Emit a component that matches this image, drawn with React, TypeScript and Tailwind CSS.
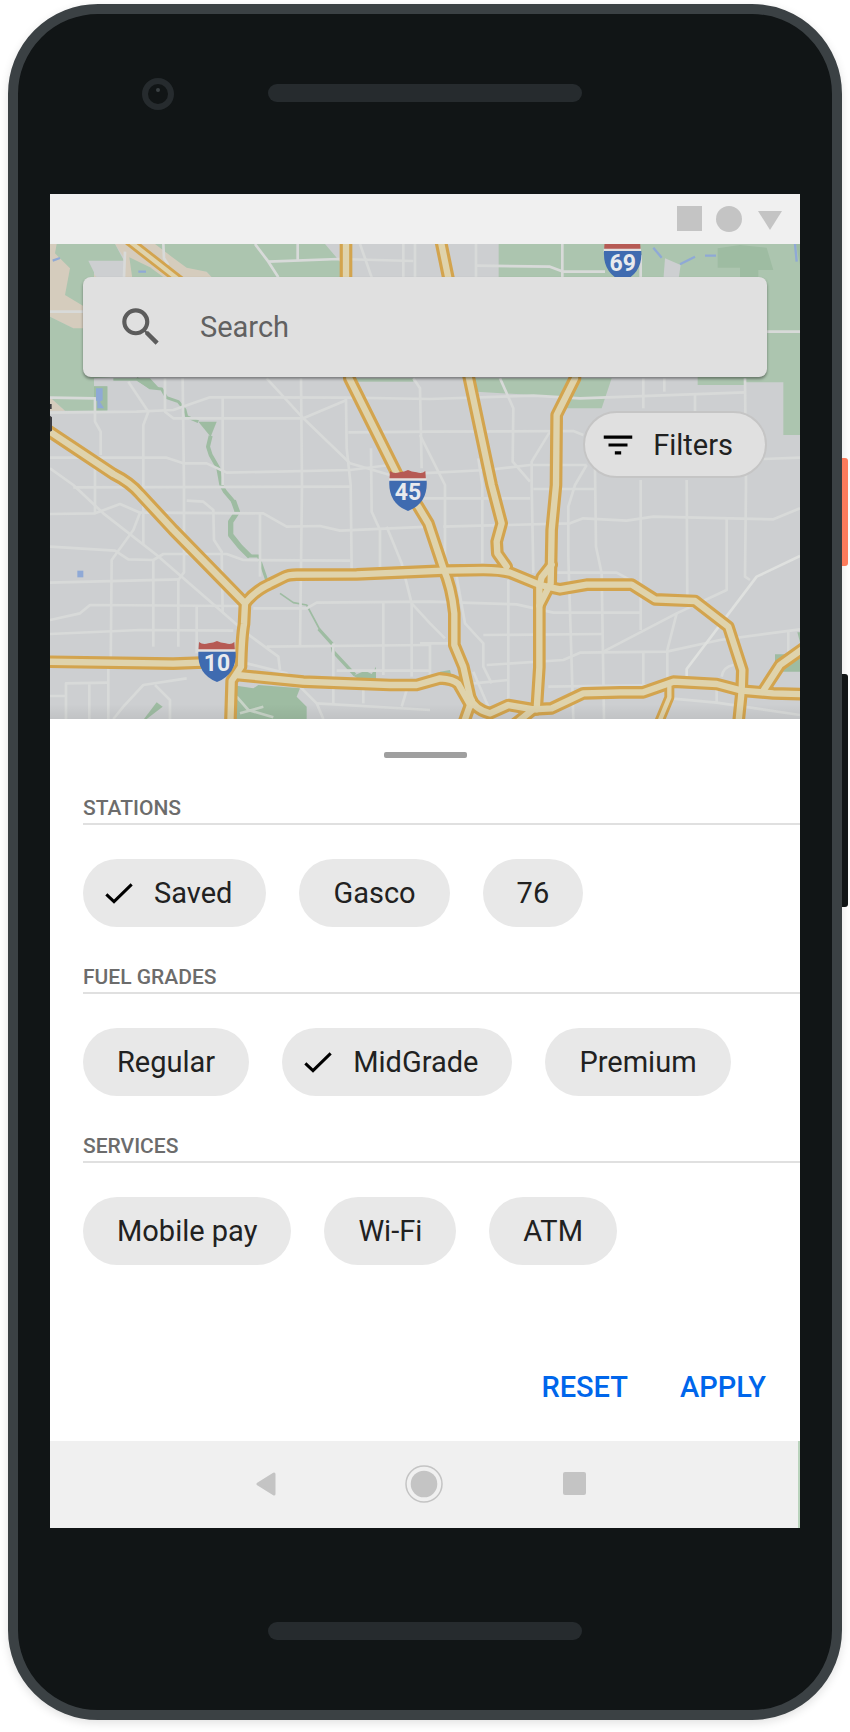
import React, { useState } from "react";

const MINOR_ROADS = [
  "M225 23L222 100", "M340 0L342 43 355 63", "M615 0L655 53 685 100", "M655 53L865 45 1090 51", "M743 0V48",
  "M930 0L965 100", "M1060 0V100", "M1095 0V100", "M0 203H100", "M0 461L135 463V533L152 563V633",
  "M0 506L260 503 370 498 480 460 890 461 1140 465 1450 455 1590 463 2085 445", "M235 413L295 503 280 543V900",
  "M398 403L402 723V985L385 1008V1208", "M345 403V503L370 523H760L890 468", "M518 460V723",
  "M650 403L760 523 900 658 1020 693", "M753 403L756 723 750 1208", "M888 461L890 613 902 723 905 978",
  "M895 565L1140 563 1570 561 1600 573", "M963 613L965 803 990 858V978", "M1090 403L1110 433 1115 673",
  "M0 641H350L400 658H470L530 686 900 678 1020 663", "M0 673L70 723 160 808 320 933 510 1098 590 1168 685 1238 690 1278",
  "M0 810L135 808 210 780 270 806 640 808 710 848 810 846 870 860 1140 848", "M135 633V808",
  "M0 908L195 920 235 946 310 948 340 930H530L580 948 900 950", "M270 806L250 858 185 948 182 1268", "M310 948V1208",
  "M0 1016L390 1006", "M0 1128L90 1108 120 1083 570 1086", "M0 1170L270 1158 550 1160", "M440 1083V1228",
  "M70 730L900 728", "M410 770L460 773 490 798 492 888 515 923 518 1103", "M630 808V998",
  "M610 1093H770L800 1076 1140 1073 1400 1081 1510 1106H1770", "M650 1208L1140 1203",
  "M1010 848L1055 958 1085 1078 1140 1138 1185 1183", "M1000 1073V1293", "M1085 1078V1298", "M850 1198V1378",
  "M860 1280H1140", "M590 1258L710 1288 800 1378 820 1425", "M800 1378L1140 1398", "M175 1268V1425",
  "M0 1356H45M48 1425V1318L175 1316M118 1318V1425", "M190 1425L220 1388 280 1323 410 1303", "M315 1323L360 1368V1425",
  "M940 1338V1378", "M1070 1338L1055 1388", "M1278 0V100", "M1278 65L1500 68 1540 83H1665", "M1537 0V100", "M1772 33V100",
  "M2150 263H2250", "M1350 403L1390 493 1388 653 1440 713", "M1780 403V493", "M1772 708V1158", "M1843 403V443",
  "M1935 448V508", "M2085 403L2088 723 2085 998 2100 1008", "M2140 645L2250 641", "M1110 573L1185 723V958",
  "M1110 688L1310 678 1440 663H1610", "M1500 563L1445 653V723L1450 988", "M1610 663L1575 723 1555 788V938L1570 1425",
  "M1635 673L1638 908 1655 988 1662 1425", "M1910 708L1912 1078", "M1285 643L1297 723V958", "M1110 763H1440M1450 735H1635",
  "M1180 848L1560 838 1600 823 1730 830 1810 818 2170 826 2250 793", "M1510 986H1700L1750 1013",
  "M2030 823V1038L1880 1108 1660 1223", "M1880 1108L1852 1218V1308",
  "M1310 1263L1540 1248 1590 1226 1850 1223 2010 1188 2250 1156", "M1300 1173L1660 1170", "M1375 1008V1368",
  "M1190 950L1220 998 1245 1138 1300 1198V1268L1325 1318", "M1495 1328L1850 1323", "M1780 1223V1348",
  "M1860 1363L2000 1376 2250 1413M2000 1376V1328M2015 1298Q2020 1268 2050 1263", "M1110 1198H1210M1140 1198V1308",
  "M2215 1163V1228", "M1270 1283L1315 1388M1270 1318L1375 1308",
];

const HIGHWAYS = [
  "M888 -20V130L898 403 1040 688 1105 788 1135 838 1180 973Q1205 1030 1213 1108V1203L1240 1268 1260 1358Q1270 1395 1320 1408L1375 1383 1450 1396 1505 1393 1600 1348 1710 1345H1780L1870 1313 2000 1320 2075 1340 2170 1348 2270 1351",
  "M1265 1370L1240 1440",
  "M1450 1396L1395 1440",
  "M1170 -20L1257 403 1325 723 1355 838 1340 893 1342 928 1370 968",
  "M1575 403L1520 513 1518 723 1505 858 1502 1018 1468 1085",
  "M1505 962L1475 1000 1468 1028V1270L1460 1396",
  "M585 1078Q615 1040 660 1020L700 1000Q715 992 740 992L920 991 1180 980 1300 978Q1350 978 1380 986L1470 1023 1530 1036 1610 1022H1745L1815 1066 1935 1071 2035 1148 2077 1278 2075 1340 2065 1440",
  "M-20 550L190 690Q240 715 270 750L370 858 585 1078 582 1140Q575 1180 573 1268L545 1310 541 1440",
  "M-20 1253L370 1259 500 1254M560 1293L760 1313 1020 1323H1100L1170 1303Q1210 1305 1225 1320L1262 1385",
  "M2140 1340L2190 1263 2270 1206",
];

const SMALL_HIGHWAYS = ["M225 -20L240 -7 390 110", "M1858 1325V1360L1825 1440"];

function Shield({ x, y, label }: { x: number; y: number; label: string }) {
  return (
    <g transform={`translate(${x} ${y})`}>
      <path d="M2 0Q14 10 30 4 46 2 56 -3 66 2 82 4 98 10 108 0L110 30H0Z" fill="#b65a54" />
      <path d="M-1 22H111V32H-1Z" fill="#e2e0df" />
      <path d="M0 29H112Q116 96 56 120 -4 96 0 29Z" fill="#3f6bb0" />
      <text x="56" y="88" textAnchor="middle" fontSize="69" fontWeight="700" fill="#e8eaee">{label}</text>
    </g>
  );
}

function CityMap() {
  return (
    <svg viewBox="0 0 2250 1425" preserveAspectRatio="xMidYMid slice" className="absolute inset-0 h-full w-full" aria-hidden="true">
      <defs>
        <linearGradient id="sheetShade" x1="0" y1="0" x2="0" y2="1">
          <stop offset="0" stopColor="#000" stopOpacity="0" />
          <stop offset="1" stopColor="#000" stopOpacity="0.06" />
        </linearGradient>
      </defs>
      <rect width="2250" height="1425" fill="#cdcfd1" />

      <g fill="#d5ccbd">
        <path d="M0 0H60L140 100V256H75L0 218Z" />
        <path d="M0 460L45 500H0Z" />
        <path d="M195 0H320L410 68 470 83 485 100H225V45Z" />
      </g>
      <g fill="#acc5af">
        <path d="M20 0H195L222 50H115L132 85V195L100 186 45 153 60 73 15 28Z" />
        <path d="M0 218L70 253H180V400L132 403V427H172V500H45L0 460Z" />
        <path d="M238 40L300 70 355 110H248Z" />
        <path d="M315 0H825L870 53 875 110H495L470 83 410 71 365 38Z" />
        <path d="M915 403H1090V413H920Z" />
        <path d="M1346 0H2250V573H2200V415H2085V423H1943V110H1346Z" />
        <path d="M1265 403H1685L1655 493H1550L1535 458 1280 443Z" />
      </g>
      <path d="M1845 43L1892 63 1885 110H1840Z" fill="#cdcfd1" />
      <g fill="#9ebca2">
        <path d="M2003 13L2070 3 2150 11 2170 78H2125V110H2070V71H2003Z" />
        <path d="M2238 0H2250V63Z" />
        <path d="M132 427H172V500H132Z" />
        <path d="M190 403H300L330 435H300L260 410H190Z" />
        <path d="M445 533H500L482 578Z" />
        <path d="M560 1325L610 1333 625 1323 750 1333 740 1358 770 1388V1425H558Z" />
        <path d="M320 1375L338 1388 290 1425H282Z" />
        <path d="M2175 1231H2215L2250 1205V1283H2175ZM2242 1165H2250V1195Z" />
        <path d="M1170 1283L1200 1278 1205 1298H1170Z" />
        <path d="M910 1295L945 1280 965 1290 978 1268V1305H925Z" />
      </g>
      <g fill="none" stroke="#9ebca2" strokeLinejoin="round">
        <path d="M260 403L300 431 335 435 350 461 385 473 405 498 410 518 445 533" strokeWidth="9" />
        <path d="M482 575L474 608 482 633 505 673 514 723 525 743 555 778" strokeWidth="12" />
        <path d="M550 770L562 803 542 833V873L570 908 600 938" strokeWidth="16" />
        <path d="M595 936H625L650 1008" strokeWidth="9" />
        <path d="M690 1048L730 1076 770 1083 810 1158" strokeWidth="5" />
        <path d="M806 1155L845 1198 850 1223 915 1293" strokeWidth="10" />
      </g>

      <g fill="none" stroke="#d8dad9" strokeWidth="8" strokeLinejoin="round">
        {MINOR_ROADS.map((d) => <path key={d} d={d} />)}
        <path d="M2250 936L2120 998 1910 1275V1300" stroke="#dfe1df" />
        <path d="M560 1358L595 1398 670 1420M570 1408L640 1388" stroke="#c8d4c8" />
      </g>

      <g fill="none" stroke="#8fa9d6" strokeWidth="7">
        <path d="M1810 11L1835 41M1890 61L1935 38M1965 35H1998M2235 0L2240 53M8 50L30 42M265 83H288" />
        <path d="M138 433H158V468L150 473 162 493H142V470H138Z" fill="#8fa9d6" stroke="none" />
        <path d="M82 980H100V1000H82Z" fill="#8fa9d6" stroke="none" />
      </g>

      <g fill="none" strokeLinejoin="round" strokeLinecap="round">
        {SMALL_HIGHWAYS.map((d) => <path key={d} d={d} stroke="#d3a44e" strokeWidth="30" />)}
        {HIGHWAYS.map((d) => <path key={d} d={d} stroke="#d3a44e" strokeWidth="38" />)}
        {SMALL_HIGHWAYS.map((d) => <path key={d} d={d} stroke="#dfd3ac" strokeWidth="13" />)}
        {HIGHWAYS.map((d) => <path key={d} d={d} stroke="#dfd3ac" strokeWidth="19" />)}
      </g>

      <Shield x={1662} y={-8} label="69" />
      <Shield x={1018} y={681} label="45" />
      <Shield x={445} y={1194} label="10" />
      <path d="M0 480H5V495H0ZM0 515L6 520V560L0 563Z" fill="#3c3c40" />
      <rect y="1380" width="2250" height="45" fill="url(#sheetShade)" />
    </svg>
  );
}

function CheckMark() {
  return (
    <svg viewBox="0 0 84 63" className="h-[21px] w-7" aria-hidden="true">
      <path d="M4 34L27 56 80 4" fill="none" stroke="#000" strokeWidth="9" />
    </svg>
  );
}

function Chip({ label, checked, onToggle }: { label: string; checked: boolean; onToggle: () => void }) {
  return (
    <button
      type="button"
      aria-pressed={checked}
      onClick={onToggle}
      className={`flex h-[68px] items-center gap-[21px] rounded-full bg-[#e8e8e8] pr-[34px] text-[29px] leading-8 whitespace-nowrap text-[#212121] ${checked ? "pl-[22px]" : "pl-[34px]"}`}
    >
      {checked && <CheckMark />}
      {label}
    </button>
  );
}

const GROUPS = [
  { title: "STATIONS", options: ["Saved", "Gasco", "76"] },
  { title: "FUEL GRADES", options: ["Regular", "MidGrade", "Premium"] },
  { title: "SERVICES", options: ["Mobile pay", "Wi-Fi", "ATM"] },
];

const DEFAULT_SELECTION = ["Saved", "MidGrade"];

function FilterSheet() {
  const [selected, setSelected] = useState<string[]>(DEFAULT_SELECTION);
  const toggle = (name: string) =>
    setSelected((now) => (now.includes(name) ? now.filter((n) => n !== name) : [...now, name]));

  return (
    <section className="flex flex-col bg-white pt-[33px] pb-[29px] pl-[33px]">
      <div className="mr-[33px] h-1.5 w-[83px] self-center rounded-xs bg-[#9f9f9f]" />
      <div className="mt-[38px] flex flex-col gap-[38px]">
        {GROUPS.map((group) => (
          <div key={group.title} className="flex flex-col">
            <h2 className="border-b-2 border-[#e0e0e0] pb-[3px] text-[21px] leading-6 font-medium text-[#6c6c6c]">{group.title}</h2>
            <div className="mt-[34px] flex gap-[33px]">
              {group.options.map((name) => (
                <Chip key={name} label={name} checked={selected.includes(name)} onToggle={() => toggle(name)} />
              ))}
            </div>
          </div>
        ))}
      </div>
      <div className="mt-[97px] flex justify-end gap-[52px] pr-[34px] text-[29px] leading-[50px] font-medium text-[#0066eb]">
        <button type="button" onClick={() => setSelected([])}>RESET</button>
        <button type="button">APPLY</button>
      </div>
    </section>
  );
}

function Speaker() {
  return <div className="h-[18px] w-[314px] rounded-full bg-[#262b2e]" />;
}

export default function App() {
  return (
    <div className="flex items-start bg-white pt-1 pr-0.5 pb-3 pl-2 font-['Roboto',sans-serif]">
      <main className="min-w-0 flex-1 rounded-[90px] border-10 border-[#3b4144] bg-[#111516] px-8 shadow-[0_3px_10px_rgba(0,0,0,0.12)]">
        <div className="grid h-[180px] grid-cols-[1fr_auto_1fr] items-start pt-16">
          <svg viewBox="0 0 32 32" className="ml-[92px] h-8 w-8" aria-hidden="true">
            <circle cx="16" cy="16" r="13" fill="none" stroke="#262b2e" strokeWidth="6" />
            <circle cx="16" cy="12" r="2" fill="#3b4144" />
          </svg>
          <div className="pt-1.5"><Speaker /></div>
        </div>

        <div className="flex flex-col">
          <div className="flex h-[50px] items-center justify-end bg-[#f0f0f0] pr-[18px]">
            <svg viewBox="0 0 105 26" className="h-[26px] w-[105px]" fill="#c4c4c4" aria-hidden="true">
              <path d="M0 0H25V25H0Z" />
              <circle cx="52" cy="13" r="13" />
              <path d="M81 5H105L93 24Z" />
            </svg>
          </div>

          <div className="relative flex h-[475px] flex-col items-end overflow-hidden px-[33px] pt-[33px]">
            <CityMap />
            <label className="relative flex h-[100px] w-full items-center gap-[34px] rounded-lg bg-[#e0e0e0] px-[33px] shadow-[0_2px_3px_rgba(0,0,0,0.4)]">
              <svg viewBox="0 0 24 24" className="h-[50px] w-[50px] shrink-0" fill="#5c5c5c" aria-hidden="true">
                <path d="M15.5 14h-.79l-.28-.27A6.471 6.471 0 0 0 16 9.500 6.500 6.500 0 1 0 9.500 16c1.610 0 3.090-.590 4.230-1.570l.27.280v.790l5 4.990L20.490 19l-4.990-5zm-6 0C7.010 14 5 11.990 5 9.500S7.010 5 9.500 5 14 7.010 14 9.500 11.990 14 9.500 14z" />
              </svg>
              <input
                type="search"
                aria-label="Search"
                placeholder="Search"
                className="min-w-0 flex-1 bg-transparent text-[29px] leading-8 text-[#212121] outline-none placeholder:text-[#616161]"
              />
            </label>
            <button
              type="button"
              className="relative mt-[34px] flex h-[67px] items-center gap-4 rounded-full border-2 border-[#c5c5c5] bg-[#e0e0e0] pr-8 pl-3.5 text-[29px] leading-8 text-[#212121]"
            >
              <svg viewBox="0 0 24 24" className="h-[38px] w-[38px]" fill="#000" aria-hidden="true">
                <path d="M3 6h18v2H3zM6 11h12v2H6zM10 16h4v2h-4z" />
              </svg>
              Filters
            </button>
          </div>

          <FilterSheet />

          <nav className="flex h-[87px] items-center justify-center border-r-2 border-[#b9d3bc] bg-[#f0f0f0] pr-[7px] pb-0.5">
            <button type="button" aria-label="Back">
              <svg viewBox="0 0 20 24" className="h-6 w-5" aria-hidden="true">
                <path d="M2 12L18 2V22Z" fill="#c4c4c4" stroke="#c4c4c4" strokeWidth="3" strokeLinejoin="round" />
              </svg>
            </button>
            <button type="button" aria-label="Home" className="mr-[120px] ml-[129px]">
              <svg viewBox="0 0 38 38" className="h-[38px] w-[38px]" aria-hidden="true">
                <circle cx="19" cy="19" r="18" fill="none" stroke="#c4c4c4" strokeWidth="1.500" />
                <circle cx="19" cy="19" r="13.300" fill="#c4c4c4" />
              </svg>
            </button>
            <button type="button" aria-label="Recent apps" className="h-[23px] w-[23px] rounded-xs bg-[#c4c4c4]" />
          </nav>
        </div>

        <div className="flex h-[182px] items-center justify-center pt-[23px]">
          <Speaker />
        </div>
      </main>

      <div className="flex w-1.5 flex-col gap-[108px] pt-[454px]">
        <div className="h-[108px] rounded-r-[3px] bg-[#fd7b5c]" />
        <div className="h-[233px] rounded-r-[3px] bg-[#111516]" />
      </div>
    </div>
  );
}
